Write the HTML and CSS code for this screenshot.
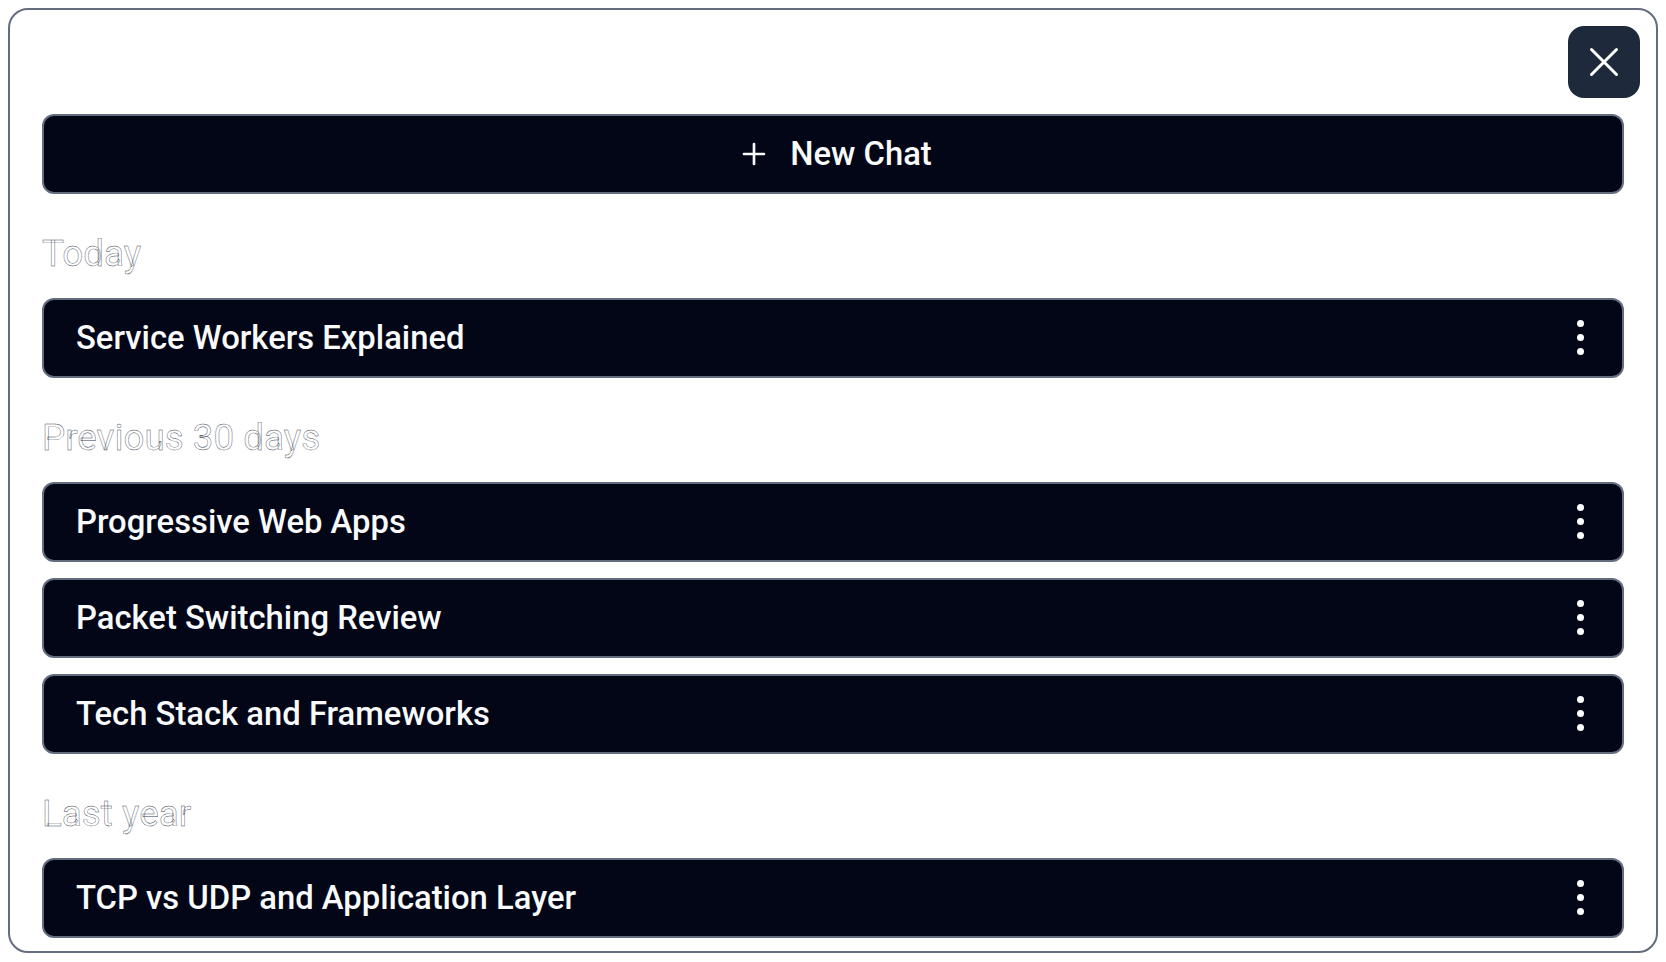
FILE: index.html
```html
<!DOCTYPE html>
<html>

<head>
    <title>Chat History</title>
    <link rel="stylesheet" href="styles.css">
</head>

<body>
    <div class="chat-panel">
        <button class="close-btn">
            <svg width="40" height="40" viewBox="0 0 40 40" fill="none" stroke="currentColor" stroke-width="3" stroke-linecap="round"><path d="M7.5 7.5l25 25M32.5 7.5l-25 25"/></svg>
        </button>

        <button class="chat-row new-chat">
            <svg width="32" height="32" viewBox="0 0 24 24" fill="none" stroke="currentColor" stroke-width="2" stroke-linecap="round"><path d="M12 4.5v15M4.5 12h15"/></svg>
            <span>New Chat</span>
        </button>

        <h2 class="chat-group">Today</h2>
        <div class="chat-row">
            <span>Service Workers Explained</span>
            <span class="row-dots"><i></i><i></i><i></i></span>
        </div>

        <h2 class="chat-group">Previous 30 days</h2>
        <div class="chat-list">
            <div class="chat-row">
                <span>Progressive Web Apps</span>
                <span class="row-dots"><i></i><i></i><i></i></span>
            </div>
            <div class="chat-row">
                <span>Packet Switching Review</span>
                <span class="row-dots"><i></i><i></i><i></i></span>
            </div>
            <div class="chat-row">
                <span>Tech Stack and Frameworks</span>
                <span class="row-dots"><i></i><i></i><i></i></span>
            </div>
        </div>

        <h2 class="chat-group">Last year</h2>
        <div class="chat-row">
            <span>TCP vs UDP and Application Layer</span>
            <span class="row-dots"><i></i><i></i><i></i></span>
        </div>
    </div>
</body>

</html>
```

FILE: styles.css
```css
* {
    box-sizing: border-box;
}

body {
    margin: 0;
    padding: 8px;
    height: 962px;
    overflow: hidden;
    font-family: Roboto, "Liberation Sans", sans-serif;
    background-color: #ffffff;
}

.chat-panel {
    position: relative;
    height: 945px;
    padding: 104px 32px 14px;
    border: 2px solid #646c7f;
    border-radius: 20px;
    background-color: #ffffff;
}

.close-btn {
    position: absolute;
    top: 16px;
    right: 16px;
    display: flex;
    align-items: center;
    justify-content: center;
    width: 72px;
    height: 72px;
    padding: 0;
    border: none;
    border-radius: 16px;
    color: #ffffff;
    background-color: #1e293b;
}

.chat-row {
    display: flex;
    align-items: center;
    justify-content: space-between;
    width: 100%;
    height: 79.5px;
    padding: 0 32px;
    border: 2px solid #646c7f;
    border-radius: 12px;
    font-family: inherit;
    font-size: 32.8px;
    font-weight: 500;
    color: #f8fafc;
    background-color: #020617;
}

.new-chat {
    justify-content: center;
    gap: 20px;
    padding-left: 36px;
}

.chat-group {
    height: 40px;
    margin: 40.5px 0 24px;
    font-size: 36.8px;
    font-weight: 400;
    line-height: 40px;
    color: #ffffff;
    -webkit-text-stroke: 0.4px #374151;
}

.chat-list {
    display: flex;
    flex-direction: column;
    gap: 16.5px;
}

.row-dots {
    display: flex;
    flex-direction: column;
    gap: 7px;
    margin-right: 6px;
}

.row-dots i {
    display: block;
    width: 7px;
    height: 7px;
    border-radius: 50%;
    background-color: #ffffff;
}
```
